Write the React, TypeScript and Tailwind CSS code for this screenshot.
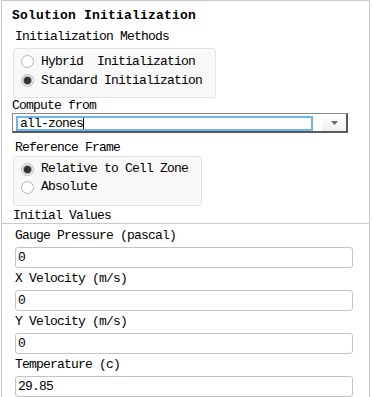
import React from 'react';

const font = { fontFamily: '"Liberation Mono", "DejaVu Sans Mono", monospace' };

// Small radio button drawn with CSS circles
const Radio = ({ checked, label }: { checked?: boolean; label: string }) => (
  <div className="flex items-center h-full">
    <div className="w-[13px] h-[13px] rounded-full border border-[#b4b4b4] bg-white flex items-center justify-center shrink-0">
      {checked && <div className="w-[7px] h-[7px] rounded-full bg-[#333] ring-1 ring-[#9a9a9a]" />}
    </div>
    <span className="ml-[7px] whitespace-pre">{label}</span>
  </div>
);

const Field = ({ label, value }: { label: string; value: string }) => (
  <div>
    <div className="h-[22px] leading-[22px] pl-[13px]">{label}</div>
    <div className="ml-[13px] w-[338px] h-[21px] border border-[#c4c4c4] rounded-[3px] bg-white flex items-center pl-[2px] leading-none">
      {value}
    </div>
  </div>
);

export default function App() {
  return (
    <div className="w-[372px] h-[397px] bg-white overflow-hidden text-[13px] tracking-[-0.8px] text-black" style={font}>
      <div className="ml-[1px] w-[369px] h-[397px] border-l border-t border-r border-[#c8c8c8]">
        <div className="mt-[7px] h-[16px] leading-[16px] pl-[10px] font-bold tracking-[0.2px]">Solution Initialization</div>
        <div className="mt-[5px] h-[16px] leading-[16px] pl-[13px]">Initialization Methods</div>

        <div className="mt-[3px] ml-[11px] w-[203px] h-[50px] border border-[#e2e2e2] rounded-[3px] bg-[#f8f8f8] pt-[3px] pl-[7px]">
          <div className="h-[19px]"><Radio label="Hybrid  Initialization" /></div>
          <div className="h-[19px]"><Radio checked label="Standard Initialization" /></div>
        </div>

        <div className="h-[15px] leading-[15px] pl-[10px]">Compute from</div>

        {/* combo box */}
        <div className="ml-[10px] w-[336px] h-[20px] border-t border-l border-r-2 border-b-2 border-t-[#8a8a8a] border-l-[#8a8a8a] border-r-[#5a5a5a] border-b-[#5a5a5a] bg-white flex items-start">
          <div className="mt-[2px] ml-[3px] w-[297px] h-[15px] border-2 border-[#6cb4ee] flex items-center pl-[2px] leading-none">
            <span>all-zones</span>
            <span className="w-px h-[11px] bg-black" />
          </div>
          <div className="ml-auto w-[24px] h-full bg-gradient-to-b from-white to-[#f0f0f0] flex items-center justify-center">
            <svg width="7" height="4" viewBox="0 0 7 4">
              <path d="M0 0h7L3.5 4z" fill="#6a6a6a" />
            </svg>
          </div>
        </div>

        <div className="mt-[7px] h-[16px] leading-[16px] pl-[13px]">Reference Frame</div>
        <div className="ml-[11px] w-[189px] h-[50px] border border-[#e2e2e2] rounded-[3px] bg-[#f8f8f8] pt-[3px] pl-[7px]">
          <div className="h-[18px]"><Radio checked label="Relative to Cell Zone" /></div>
          <div className="h-[18px]"><Radio label="Absolute" /></div>
        </div>

        <div className="mt-[2px] h-[15px] leading-[15px] pl-[11px]">Initial Values</div>
        <div className="border-t border-[#c8c8c8] pt-[1px]">
          <Field label="Gauge Pressure (pascal)" value="0" />
          <Field label="X Velocity (m/s)" value="0" />
          <Field label="Y Velocity (m/s)" value="0" />
          <Field label="Temperature (c)" value="29.85" />
        </div>
      </div>
    </div>
  );
}
